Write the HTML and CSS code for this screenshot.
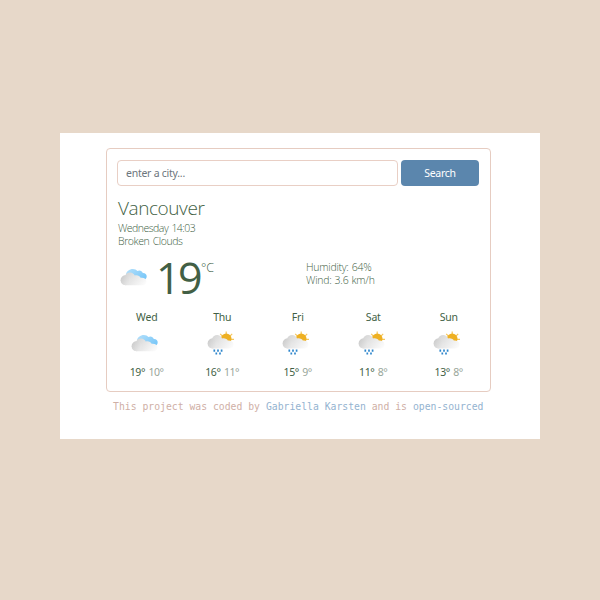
FILE: index.html
```html
<!DOCTYPE html>
<html lang="en">
<head>
<meta charset="utf-8">
<title>Weather</title>
<link rel="stylesheet" href="styles.css">
</head>
<body>
<svg class="defs" width="0" height="0" aria-hidden="true">
  <defs>
    <linearGradient id="grey" x1="0" y1=".3" x2="1" y2=".75">
      <stop offset="0" stop-color="#d2d2d2"/><stop offset=".45" stop-color="#e6e6e6"/><stop offset="1" stop-color="#fbfbfb"/>
    </linearGradient>
    <linearGradient id="puff" x1="0" y1=".2" x2="1" y2=".8">
      <stop offset="0" stop-color="#cbcbcb"/><stop offset="1" stop-color="#ececec"/>
    </linearGradient>
    <linearGradient id="blue" x1="0" y1="0" x2="1" y2=".6">
      <stop offset="0" stop-color="#b4e0fb"/><stop offset="1" stop-color="#7cc8f8"/>
    </linearGradient>
    <symbol id="clouds" viewBox="0 0 28 28">
      <path d="M6 11C6 7.500 9.500 5 12.800 5c2 0 3.600.8 4.600 2 2-1.200 4.600-.4 5.400 1.900 2.200-.2 3.900 1.300 3.900 3.300 0 2-1.300 3.600-2.900 3.600H12z" fill="url(#blue)"/>
      <path d="M5.500 21.300a5 5 0 0 1-.3-9.900C6 9.400 8 8.200 10.300 8.400c2 .1 3.600 1.300 4.400 3.100 2.600-.9 5 .4 5.900 2.300 3-.5 5.900.9 5.900 3.600 0 2.400-2 3.900-4.400 3.900z" fill="url(#grey)"/>
      <circle cx="5.600" cy="16.300" r="5" fill="url(#puff)"/>
    </symbol>
    <symbol id="rain" viewBox="0 0 28 28">
      <path d="M19.200 1.600v3M13.200 3.800l2 2M25.200 3.800l-2 2M24 9.300h3M23 12.600l2.300 2" stroke="#f5c65b" stroke-width="1.200"/>
      <circle cx="19.200" cy="8.800" r="5.300" fill="#eeb022"/>
      <path d="M5.500 18.500a5 5 0 0 1-.3-9.900C6 6.100 8 4.900 10.300 5c2.200.1 4 1.500 4.700 3.500 2.600-.7 5 .4 5.800 2 3-.3 5.700 1.100 5.700 4 0 2.400-2 4-4.400 4z" fill="url(#grey)"/>
      <circle cx="5.600" cy="13.500" r="5" fill="url(#puff)"/>
      <path d="M7.300 19.500v2.200M11 19.500v2.200M14.600 19.500v2.200M9.300 22.600v2M13 22.600v2" stroke="#2e86cc" stroke-width="1.700"/>
    </symbol>
  </defs>
</svg>
<main class="panel">
  <section class="card">
    <form class="search">
      <input class="city-input" type="text" placeholder="enter a city...">
      <button class="search-button" type="button">Search</button>
    </form>
    <h1 class="city">Vancouver</h1>
    <p class="line"><span class="date">Wednesday 14:03</span></p>
    <p class="line"><span class="sky">Broken Clouds</span></p>
    <div class="current">
      <svg class="current-icon"><use href="#clouds"/></svg>
      <span class="temperature">19</span><span class="unit">°C</span>
      <div class="details">
        <p class="line humidity">Humidity: 64%</p>
        <p class="line wind">Wind: 3.6 km/h</p>
      </div>
    </div>
    <div class="forecast">
      <div class="day"><span class="name">Wed</span><svg class="icon"><use href="#clouds"/></svg><span class="temps">19° <span class="low">10°</span></span></div>
      <div class="day"><span class="name">Thu</span><svg class="icon"><use href="#rain"/></svg><span class="temps">16° <span class="low">11°</span></span></div>
      <div class="day"><span class="name">Fri</span><svg class="icon"><use href="#rain"/></svg><span class="temps">15° <span class="low">9°</span></span></div>
      <div class="day"><span class="name">Sat</span><svg class="icon"><use href="#rain"/></svg><span class="temps">11° <span class="low">8°</span></span></div>
      <div class="day"><span class="name">Sun</span><svg class="icon"><use href="#rain"/></svg><span class="temps">13° <span class="low">8°</span></span></div>
    </div>
  </section>
  <footer class="credit">This project was coded by <a class="link">Gabriella Karsten</a> and is <a class="link">open-sourced</a></footer>
</main>
</body>
</html>
```
FILE: styles.css
```css
* { box-sizing: border-box; }
body {
  margin: 0;
  height: 600px;
  padding: 133px 60px 0;
  background: #e7d8c9;
  color: #425f45;
  font-family: "Noto Sans", "Open Sans", sans-serif;
  font-size: 10.5px;
}
.defs { position: absolute; }
.panel { height: 306px; padding: 15px 49px 0 46px; background: #fff; }
.card {
  height: 244px;
  padding: 11px 11px 0 10px;
  border: 1px solid #e6ccc1;
  border-radius: 4px;
}
.search { display: flex; gap: 3px; height: 26px; }
.city-input {
  width: 281px;
  height: 26px;
  padding: 0 8px;
  border: 1px solid #e9cfc5;
  border-radius: 4px;
  background: #fff;
  font: 10.500px "Noto Sans", sans-serif;
  letter-spacing: -.25px;
}
.city-input::placeholder { color: #6c757d; opacity: 1; }
.search-button {
  width: 78px;
  height: 26px;
  padding: 0;
  border: 0;
  border-radius: 4px;
  background: #5b86ad;
  color: #fff;
  font: 10.500px "Noto Sans", sans-serif;
  letter-spacing: -.3px;
}
.city { margin: 10px 0 0 1px; height: 26px; font-family: "Open Sans", sans-serif; font-size: 19px; line-height: 25px; font-weight: 300; letter-spacing: -.42px; }
.line { margin: 0; height: 12.500px; font-family: "Open Sans", sans-serif; line-height: 12.500px; font-weight: 300; white-space: nowrap; }
.date { margin-left: 1px; letter-spacing: -.52px; word-spacing: 1px; }
.sky { margin-left: 1px; letter-spacing: -.42px; word-spacing: 1px; }
.current { display: flex; height: 63px; padding-top: 14px; }
.current-icon { width: 28px; height: 28px; margin: 3px 0 0 3px; }
.temperature { width: 44px; margin-left: 8px; font-family: "Open Sans", sans-serif; font-size: 43px; line-height: 34px; letter-spacing: -2.500px; }
.unit { width: 16px; margin-left: 1px; font-family: "Open Sans", sans-serif; font-size: 12.500px; line-height: 13px; font-weight: 300; }
.details { margin-left: 89px; }
.humidity { letter-spacing: -.25px; word-spacing: .6px; }
.wind { letter-spacing: -.22px; word-spacing: .5px; }
.forecast { display: grid; grid-template-columns: repeat(5, 75.500px); margin-left: -8px; }
.day { display: flex; flex-direction: column; align-items: center; }
.name { height: 15px; line-height: 15px; letter-spacing: -.2px; }
.icon { width: 28px; height: 28px; margin: 5px 3px 0 0; }
.temps { height: 15px; margin-top: 7px; line-height: 15px; letter-spacing: -.4px; word-spacing: 1px; white-space: nowrap; }
.low { color: #99a69a; }
.credit {
  margin: 7.500px 0 0 7px;
  color: #cfafa6;
  font: 9.770px/14px "DejaVu Sans Mono", monospace;
  white-space: nowrap;
}
.link { color: #94b3d0; }
```
